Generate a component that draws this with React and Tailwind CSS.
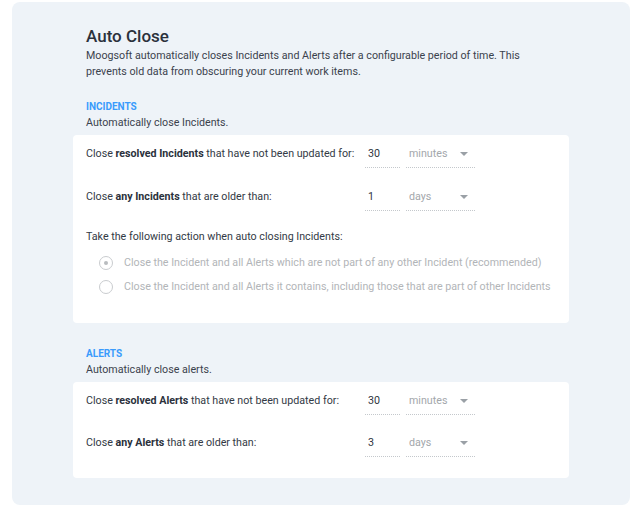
import React from 'react';

const font = { fontFamily: 'Roboto, "Liberation Sans", sans-serif' };

function Arrow() {
    return (
        <svg width="8" height="4" viewBox="0 0 8 4" className="shrink-0">
            <path d="M0 0 L8 0 L4 4 Z" fill="#9aa0a6" />
        </svg>
    );
}

function Row({ children, value, unit }) {
    return (
        <div className="flex items-center h-[27px]">
            <div className="w-[279px] text-[10.7px] text-[#333a45]">{children}</div>
            <div className="w-[35px] h-[27px] flex items-center pl-[3px] border-b border-dotted border-[#c4c8cc] text-[10.7px] text-[#2f3540]">
                {value}
            </div>
            <div className="ml-[6px] w-[69px] h-[27px] flex items-center justify-between pl-[3px] pr-[7px] border-b border-dotted border-[#c4c8cc] text-[10.7px] text-[#a3a7ab]">
                <span>{unit}</span>
                <Arrow />
            </div>
        </div>
    );
}

function Radio({ checked, label }) {
    return (
        <div className="flex items-center h-[24px] pl-[13px]">
            <div className="w-[14px] h-[14px] rounded-full border-[1.5px] border-[#c9cccf] flex items-center justify-center">
                {checked && <div className="w-[4px] h-[4px] rounded-full bg-[#b9bcbf]"></div>}
            </div>
            <span className="ml-[11px] text-[10.7px] text-[#b2b5b8]">{label}</span>
        </div>
    );
}

function App() {
    return (
        <div className="bg-white w-[641px] h-[513px] pl-[12px] pt-[2px]" style={font}>
            <div className="w-[618px] h-[503px] bg-[#eef3f8] rounded-[8px] pt-[22px] pl-[61px]">
                <div className="pl-[13px]">
                    <h1 className="text-[17px] leading-[24px] font-medium text-[#2b313c]">Auto Close</h1>
                    <p className="text-[10.7px] leading-[16px] text-[#3b424d] w-[470px]">
                        Moogsoft automatically closes Incidents and Alerts after a configurable period of time. This prevents old data from obscuring your current work items.
                    </p>
                    <div className="mt-[19px] text-[10px] leading-[16px] font-bold text-[#3a9bfc]">INCIDENTS</div>
                    <div className="text-[10.7px] leading-[16px] text-[#3b424d]">Automatically close Incidents.</div>
                </div>

                <div className="mt-[4px] w-[496px] bg-white rounded-[4px] pt-[6px] pb-[24px] pl-[13px]">
                    <Row value="30" unit="minutes">
                        Close <b className="font-bold text-[#2b313c]">resolved Incidents</b> that have not been updated for:
                    </Row>
                    <div className="mt-[16px]">
                        <Row value="1" unit="days">
                            Close <b className="font-bold text-[#2b313c]">any Incidents</b> that are older than:
                        </Row>
                    </div>
                    <div className="mt-[18px] text-[10.7px] leading-[16px] text-[#333a45]">Take the following action when auto closing Incidents:</div>
                    <div className="mt-[6px]">
                        <Radio checked label="Close the Incident and all Alerts which are not part of any other Incident (recommended)" />
                        <Radio label="Close the Incident and all Alerts it contains, including those that are part of other Incidents" />
                    </div>
                </div>

                <div className="pl-[13px] mt-[23px]">
                    <div className="text-[10px] leading-[16px] font-bold text-[#3a9bfc]">ALERTS</div>
                    <div className="text-[10.7px] leading-[16px] text-[#3b424d]">Automatically close alerts.</div>
                </div>

                <div className="mt-[4px] w-[496px] bg-white rounded-[4px] pt-[6px] pb-[21px] pl-[13px]">
                    <Row value="30" unit="minutes">
                        Close <b className="font-bold text-[#2b313c]">resolved Alerts</b> that have not been updated for:
                    </Row>
                    <div className="mt-[15px]">
                        <Row value="3" unit="days">
                            Close <b className="font-bold text-[#2b313c]">any Alerts</b> that are older than:
                        </Row>
                    </div>
                </div>
            </div>
        </div>
    );
}

export default App;
